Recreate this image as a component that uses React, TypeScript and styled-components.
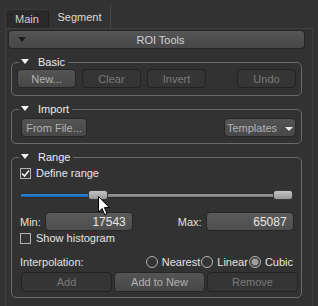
import * as React from 'react'
import styled, { createGlobalStyle, css } from 'styled-components'

const GlobalStyle = createGlobalStyle`
  body {
    margin: 0;
    background: #323232;
    font-family: "Liberation Sans", Arial, sans-serif;
    font-size: 11px;
    color: #e2e2e2;
  }
`

const MIN = 17543
const MAX = 65087
const RANGE = 65535

const App = () => {
  const lo = MIN / RANGE
  const hi = MAX / RANGE
  return (
    <Screen>
      <GlobalStyle />
      <TabBar>
        <Tab>Main</Tab>
        <Tab $active>Segment</Tab>
      </TabBar>
      <Panel>
        <SectionBar>
          <Triangle $dark />
          <SectionTitle>ROI Tools</SectionTitle>
        </SectionBar>

        <Group>
          <Legend>
            <Triangle />
            Basic
          </Legend>
          <Row>
            <Button $w={59}>New...</Button>
            <Button $w={59} disabled>Clear</Button>
            <Button $w={59} disabled>Invert</Button>
            <Spacer />
            <Button $w={59} disabled>Undo</Button>
          </Row>
        </Group>

        <Group $bottom={6} $top={2}>
          <Legend>
            <Triangle />
            Import
          </Legend>
          <Row $indent={4}>
            <Button $w={66}>From File...</Button>
            <Spacer />
            <Button $w={72}>
              Templates
              <SmallArrow />
            </Button>
          </Row>
        </Group>

        <Group $bottom={5}>
          <Legend>
            <Triangle />
            Range
          </Legend>
          <Content>
            <CheckRow>
              <CheckBox $checked>
                <svg width="9" height="9" viewBox="0 0 9 9">
                  <path d="M1 4.5 L3.5 7 L8 1.5" stroke="#f0f0f0" strokeWidth="1.6" fill="none" />
                </svg>
              </CheckBox>
              Define range
            </CheckRow>

            <Slider>
              <Track>
                <Fill style={{ width: `${lo * 255 + 2}px` }} />
              </Track>
              <Handle style={{ left: `${lo * 255}px` }} />
              <Handle style={{ left: `${hi * 255}px` }} />
              <Cursor width="13" height="20" viewBox="0 0 13 20">
                <path
                  d="M0.5 0.5 L0.5 16 L4 12.5 L6.7 18.6 L9 17.6 L6.4 11.6 L11.3 11.6 Z"
                  fill="#ffffff"
                  stroke="#000000"
                  strokeWidth="1"
                  strokeLinejoin="round"
                />
              </Cursor>
            </Slider>

            <FieldRow>
              <Field>
                <FieldLabel>Min:</FieldLabel>
                <NumberBox value={String(MIN)} readOnly />
              </Field>
              <Field>
                <FieldLabel>Max:</FieldLabel>
                <NumberBox value={String(MAX)} readOnly />
              </Field>
            </FieldRow>

            <CheckRow $flat>
              <CheckBox />
              Show histogram
            </CheckRow>

            <InterpRow>
              <span>Interpolation:</span>
              <Radios>
                <RadioItem>
                  <Radio />
                  Nearest
                </RadioItem>
                <RadioItem>
                  <Radio />
                  Linear
                </RadioItem>
                <RadioItem>
                  <Radio $checked />
                  Cubic
                </RadioItem>
              </Radios>
            </InterpRow>

            <ActionRow>
              <Button disabled>Add</Button>
              <Button>Add to New</Button>
              <Button disabled>Remove</Button>
            </ActionRow>
          </Content>
        </Group>
      </Panel>
    </Screen>
  )
}

export default App

const Screen = styled.div`
  width: 318px;
  height: 306px;
  overflow: hidden;
  background: #323232;
`

const TabBar = styled.div`
  display: flex;
  align-items: flex-end;
  height: 28px;
  padding-left: 5px;
`

const Tab = styled.div<{ $active?: boolean }>`
  box-sizing: border-box;
  display: flex;
  align-items: center;
  justify-content: center;
  ${(p) =>
    p.$active
      ? css`
          width: 62px;
          height: 23px;
          padding-top: 1px;
          background: #323232;
          color: #dcdcdc;
          border-right: 1px solid #474747;
        `
      : css`
          width: 44px;
          height: 19px;
          background: #2a2a2a;
          color: #cfcfcf;
          border-top: 1px solid #3c3c3c;
          border-left: 1px solid #3c3c3c;
          border-right: 1px solid #202020;
        `}
`

const Panel = styled.div`
  box-sizing: border-box;
  width: 308px;
  height: 278px;
  margin-left: 5px;
  padding: 1px 6px 0 2px;
  border: 1px solid #404040;
  border-bottom: none;
`

const SectionBar = styled.div`
  box-sizing: border-box;
  position: relative;
  display: flex;
  align-items: center;
  width: 297px;
  height: 19px;
  padding-left: 9px;
  border: 1px solid #262626;
  border-radius: 4px;
  background: linear-gradient(#555555, #474747);
`

const SectionTitle = styled.span`
  flex: 1;
  text-align: center;
  margin-right: 18px;
  color: #d2d2d2;
`

const Triangle = styled.span<{ $dark?: boolean }>`
  display: inline-block;
  width: 0;
  height: 0;
  border-left: 4.5px solid transparent;
  border-right: 4.5px solid transparent;
  border-top: 5px solid ${(p) => (p.$dark ? '#1c1c1c' : '#f4f4f4')};
  margin-right: 9px;
  vertical-align: 2px;
`

const Group = styled.fieldset<{ $top?: number; $bottom?: number }>`
  box-sizing: border-box;
  width: 291px;
  margin: 7px 0 0 3px;
  padding: ${(p) => p.$top ?? 0}px 5px ${(p) => p.$bottom ?? 7}px 5px;
  border: 1px solid #6a6a6a;
  border-radius: 5px;
  min-inline-size: 0;
`

const Legend = styled.legend`
  margin-left: 2px;
  padding: 0 3px 0 2px;
  line-height: 13px;
  height: 13px;
  color: #ececec;
`

const Row = styled.div<{ $indent?: number }>`
  display: flex;
  gap: 6px;
  padding-left: ${(p) => p.$indent ?? 0}px;
`

const Spacer = styled.div`
  flex: 1;
`

const Button = styled.button<{ $w?: number }>`
  box-sizing: border-box;
  display: flex;
  align-items: center;
  justify-content: center;
  gap: 8px;
  ${(p) => (p.$w ? `width: ${p.$w}px;` : '')}
  height: 19px;
  padding: 0 4px;
  font: inherit;
  color: #b2b2b2;
  border: 1px solid #262626;
  border-radius: 4px;
  background: linear-gradient(#545454, #484848);
  &:disabled {
    color: #7a7a7a;
    background: #353535;
    border-color: #232323;
  }
`

const SmallArrow = styled.span`
  width: 0;
  height: 0;
  border-left: 4px solid transparent;
  border-right: 4px solid transparent;
  border-top: 4px solid #e8e8e8;
  margin-top: 3px;
`

const Content = styled.div`
  display: flex;
  flex-direction: column;
  padding-left: 3px;
`

const CheckRow = styled.label<{ $flat?: boolean }>`
  display: flex;
  align-items: center;
  gap: 5px;
  height: 14px;
  margin-top: ${(p) => (p.$flat ? 0 : 2)}px;
  color: #e6e6e6;
`

const CheckBox = styled.span<{ $checked?: boolean }>`
  box-sizing: border-box;
  display: flex;
  align-items: center;
  justify-content: center;
  width: 11px;
  height: 11px;
  border: 1px solid #b4b4b4;
  background: #343434;
`

const Slider = styled.div`
  position: relative;
  width: 275px;
  height: 12px;
  margin-top: 9px;
  display: flex;
  align-items: center;
`

const Track = styled.div`
  box-sizing: border-box;
  width: 272px;
  height: 5px;
  border: 1px solid #2a2a2a;
  border-radius: 2px;
  background: linear-gradient(#9a9a9a, #7c7c7c);
  overflow: hidden;
`

const Fill = styled.div`
  height: 100%;
  background: linear-gradient(#2f86d6, #1762ad);
`

const Handle = styled.div`
  box-sizing: border-box;
  position: absolute;
  top: 1px;
  width: 20px;
  height: 10px;
  border: 1px solid #3a3a3a;
  border-radius: 3px;
  background: linear-gradient(#c4c4c4, #989898);
`

const Cursor = styled.svg`
  position: absolute;
  left: 78px;
  top: 7px;
`

const FieldRow = styled.div`
  display: flex;
  gap: 45px;
  margin-top: 11px;
`

const Field = styled.div`
  display: flex;
  align-items: center;
  gap: 4px;
`

const FieldLabel = styled.span`
  color: #e6e3d6;
`

const NumberBox = styled.input`
  box-sizing: border-box;
  width: 88px;
  height: 19px;
  padding: 0 6px 0 0;
  font: inherit;
  font-size: 12px;
  text-align: right;
  color: #e6e6e6;
  border: 1px solid #262626;
  border-radius: 4px;
  background: linear-gradient(#5a5a5a, #4e4e4e);
  outline: none;
`

const InterpRow = styled.div`
  display: flex;
  align-items: center;
  justify-content: space-between;
  height: 14px;
  margin-top: 10px;
  padding-right: 3px;
  color: #e2e2e2;
`

const Radios = styled.div`
  display: flex;
  gap: 1px;
`

const RadioItem = styled.label`
  display: flex;
  align-items: center;
  gap: 4px;
`

const Radio = styled.span<{ $checked?: boolean }>`
  box-sizing: border-box;
  width: 12px;
  height: 12px;
  border-radius: 50%;
  border: 1px solid #b4b4b4;
  background: ${(p) =>
    p.$checked ? 'radial-gradient(circle, #9e9e9e 0 3px, #5a5a5a 3.5px 4px, #3a3a3a 4.5px)' : '#343434'};
`

const ActionRow = styled.div`
  display: grid;
  grid-template-columns: repeat(3, 91px);
  gap: 2px;
  margin: 3px 0 0 1px;
  & > button {
    height: 20px;
  }
`
